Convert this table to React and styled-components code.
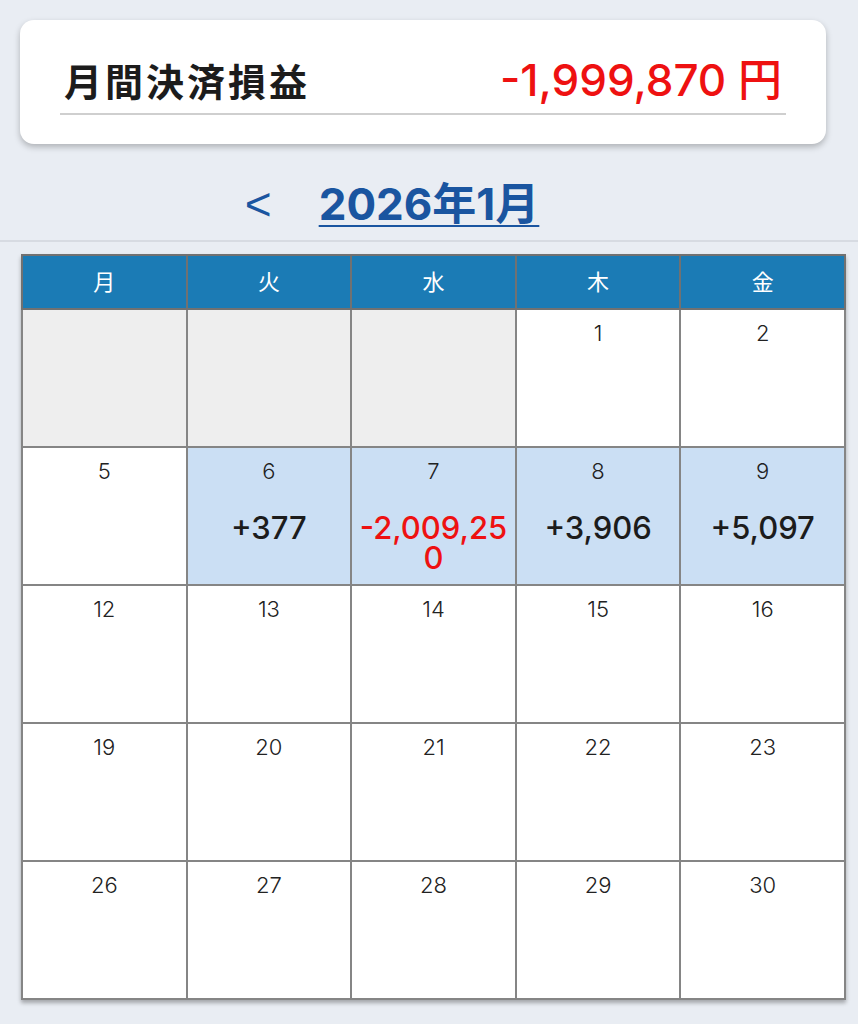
import React from "react";
import styled, { createGlobalStyle } from "styled-components";

const Global = createGlobalStyle`
  html, body { margin: 0; padding: 0; background: #e9edf3; }
  body { font-family: Inter, "Noto Sans CJK JP", sans-serif; color: #222; }
`;

const Page = styled.div`
  display: flex;
  flex-direction: column;
  padding-top: 20px;
  padding-bottom: 24px;
`;

const Card = styled.section`
  margin: 0 32px 0 20px;
  background: #fff;
  border-radius: 14px;
  box-shadow: 0 3px 6px rgba(0, 0, 0, 0.25);
  padding: 36px 40px 29px;
`;

const SummaryRow = styled.div`
  display: flex;
  justify-content: space-between;
  align-items: center;
  padding: 0 4px 9px;
  border-bottom: 2px solid #cfcfcf;
`;

const SummaryLabel = styled.h2`
  margin: 0;
  font-family: "Noto Sans CJK JP", sans-serif;
  font-size: 38px;
  line-height: 48px;
  font-weight: 700;
  letter-spacing: 3px;
  color: #1c1c1c;
`;

const SummaryValue = styled.div`
  font-family: Inter, "Noto Sans CJK JP", sans-serif;
  font-size: 44px;
  line-height: 48px;
  font-weight: 500;
  color: #ee1111;
`;

const NavBar = styled.nav`
  display: flex;
  justify-content: center;
  align-items: center;
  gap: 48px;
  padding: 36px 0 12px;
  border-bottom: 2px solid #d7dbe2;
`;

const Arrow = styled.button`
  border: none;
  background: none;
  padding: 0;
  width: 26px;
  font-family: "Liberation Sans", sans-serif;
  font-size: 46px;
  line-height: 48px;
  color: #1a55a0;
  visibility: ${(p) => (p.$hidden ? "hidden" : "visible")};
`;

const MonthTitle = styled.a`
  font-family: Inter, "Noto Sans CJK JP", sans-serif;
  font-size: 44px;
  line-height: 48px;
  font-weight: 700;
  color: #1a55a0;
  text-decoration: underline;
  text-decoration-thickness: 2px;
  text-underline-offset: 5px;
`;

const Table = styled.table`
  margin: 12px 12px 0 21px;
  width: 825px;
  border-collapse: collapse;
  table-layout: fixed;
  box-shadow: 0 3px 4px rgba(0, 0, 0, 0.3);
`;

const HeadCell = styled.th`
  height: 48px;
  background: #1b7bb5;
  border: 2px solid #717171;
  color: #fff;
  font-family: "Noto Sans CJK JP", sans-serif;
  font-size: 22px;
  line-height: 26px;
  font-weight: 400;
  padding: 0 0 4px;
`;

const DayCell = styled.td`
  height: 126px;
  border: 2px solid #858585;
  vertical-align: top;
  text-align: center;
  padding: 10px 4px 0;
  background: ${(p) =>
    p.$empty ? "#eeeeee" : p.$active ? "#cbdff4" : "#ffffff"};
`;

const DayNum = styled.div`
  font-family: Inter, sans-serif;
  font-size: 22px;
  font-weight: 300;
  line-height: 26px;
  color: #222;
`;

const Amount = styled.div`
  margin-top: 29px;
  font-family: Inter, sans-serif;
  font-size: 31px;
  font-weight: 500;
  line-height: 30px;
  word-break: break-all;
  color: ${(p) => (p.$neg ? "#ee1111" : "#1c1c1c")};
`;

const weekdays = ["月", "火", "水", "木", "金"];

const amounts = { 6: "+377", 7: "-2,009,250", 8: "+3,906", 9: "+5,097" };

const weeks = [
  [null, null, null, 1, 2],
  [5, 6, 7, 8, 9],
  [12, 13, 14, 15, 16],
  [19, 20, 21, 22, 23],
  [26, 27, 28, 29, 30],
];

export default function App() {
  return (
    <>
      <Global />
      <Page>
        <Card>
          <SummaryRow>
            <SummaryLabel>月間決済損益</SummaryLabel>
            <SummaryValue>-1,999,870 円</SummaryValue>
          </SummaryRow>
        </Card>
        <NavBar>
          <Arrow>&lt;</Arrow>
          <MonthTitle>2026年1月</MonthTitle>
          <Arrow $hidden>&gt;</Arrow>
        </NavBar>
        <Table>
          <thead>
            <tr>
              {weekdays.map((d) => (
                <HeadCell key={d}>{d}</HeadCell>
              ))}
            </tr>
          </thead>
          <tbody>
            {weeks.map((w, i) => (
              <tr key={i}>
                {w.map((d, j) =>
                  d === null ? (
                    <DayCell key={j} $empty />
                  ) : (
                    <DayCell key={j} $active={!!amounts[d]}>
                      <DayNum>{d}</DayNum>
                      {amounts[d] && (
                        <Amount $neg={amounts[d].startsWith("-")}>
                          {amounts[d]}
                        </Amount>
                      )}
                    </DayCell>
                  )
                )}
              </tr>
            ))}
          </tbody>
        </Table>
      </Page>
    </>
  );
}
